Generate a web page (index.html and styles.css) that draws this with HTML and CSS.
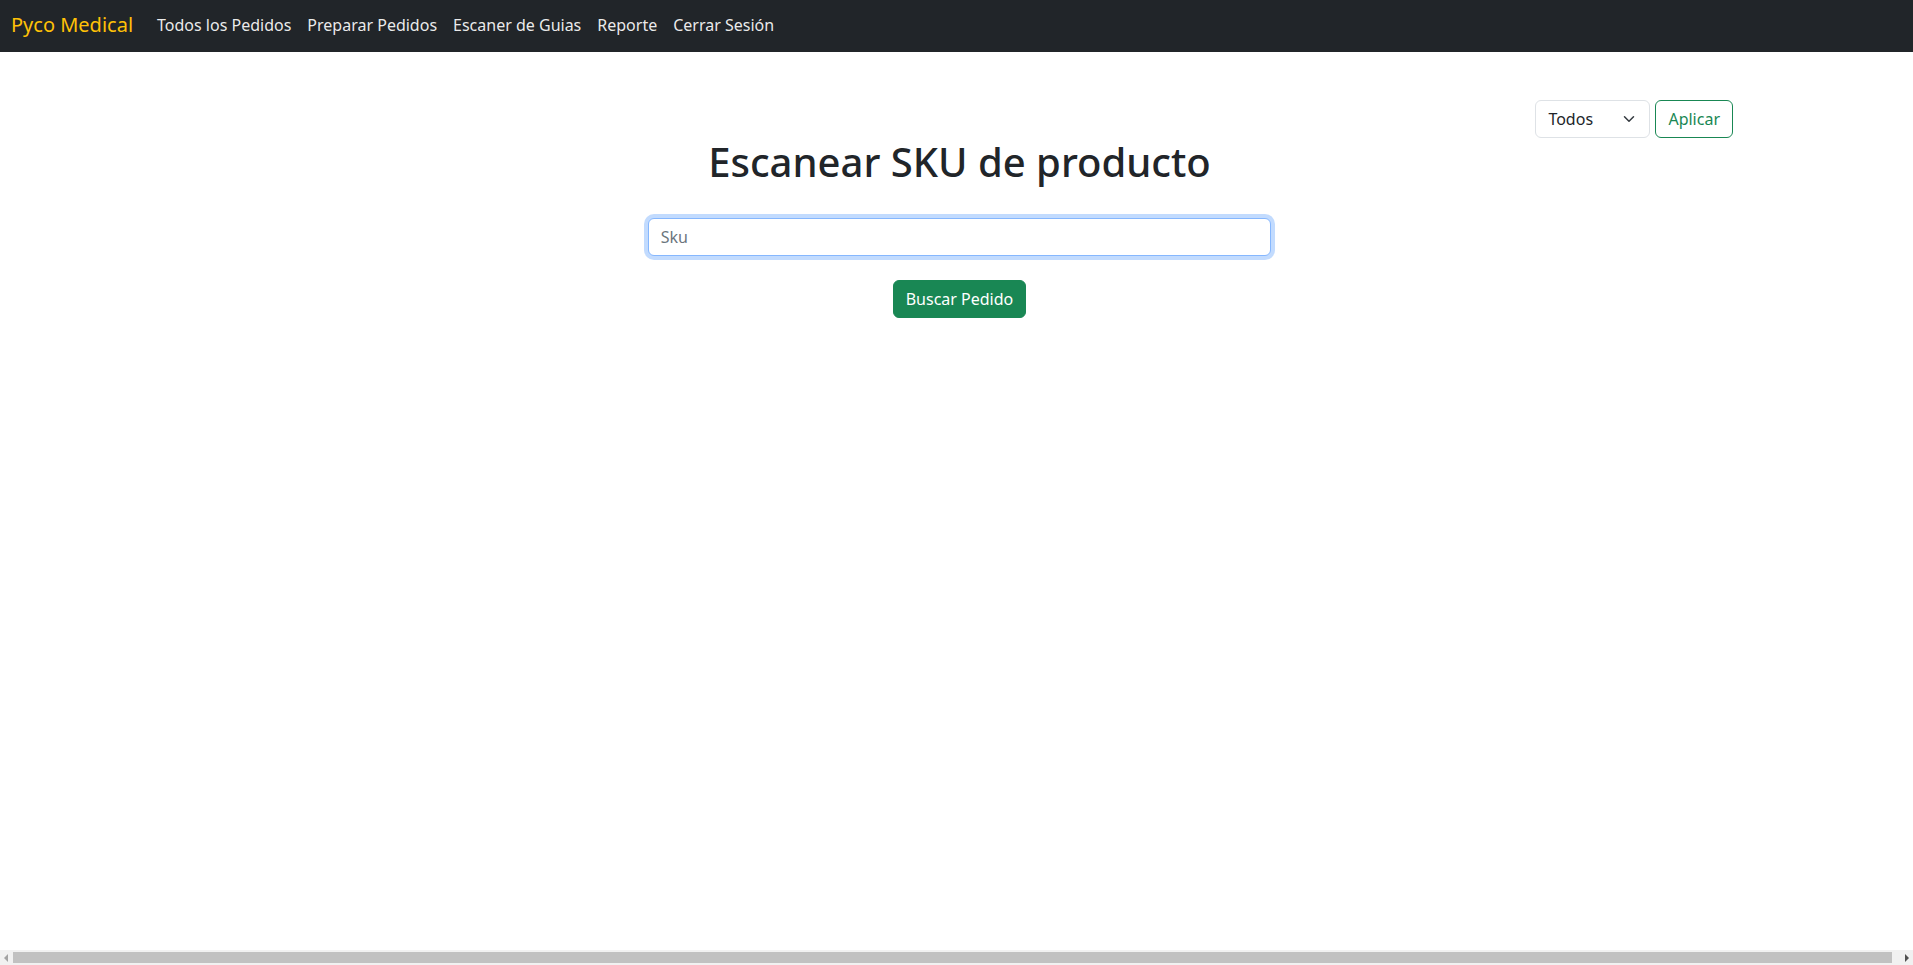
FILE: index.html
```html
<!DOCTYPE html>
<html lang="es">
<head>
<meta charset="utf-8">
<title>Pyco Medical</title>
<link rel="stylesheet" href="styles.css">
</head>
<body>
<nav class="navbar">
  <a class="brand" href="#">Pyco Medical</a>
  <ul class="nav">
    <li><a href="#">Todos los Pedidos</a></li>
    <li><a href="#">Preparar Pedidos</a></li>
    <li><a href="#">Escaner de Guias</a></li>
    <li><a href="#">Reporte</a></li>
    <li><a href="#">Cerrar Sesión</a></li>
  </ul>
</nav>
<main class="row">
  <div class="filter">
    <div class="select">
      <span>Todos</span>
      <svg width="16" height="12" viewBox="0 0 16 16" aria-hidden="true"><path d="M2 5l6 6 6-6" fill="none" stroke="#343a40" stroke-width="2" stroke-linecap="round" stroke-linejoin="round"/></svg>
    </div>
    <button class="btn btn-outline">Aplicar</button>
  </div>
  <h1 class="title">Escanear SKU de producto</h1>
  <div class="col">
    <input class="input" type="text" placeholder="Sku">
  </div>
  <div class="actions">
    <button class="btn btn-success">Buscar Pedido</button>
  </div>
</main>
<div class="hscroll" aria-hidden="true">
  <svg class="arrow" width="8" height="8" viewBox="0 0 8 8"><path d="M6 0v8L2 4z" fill="#a3a3a3"/></svg>
  <div class="thumb"></div>
  <svg class="arrow" width="8" height="8" viewBox="0 0 8 8"><path d="M2 0v8l4-4z" fill="#505050"/></svg>
</div>
</body>
</html>
```
FILE: styles.css
```css
html, body {
  margin: 0;
  padding: 0;
}
body {
  font-family: "Noto Sans", "Open Sans", sans-serif;
  font-size: 16px;
  line-height: 1.5;
  color: #212529;
  background: #fff;
  overflow-x: hidden;
}
.navbar {
  display: flex;
  align-items: center;
  height: 52px;
  padding: 0 12px 2px 11px;
  background: #212529;
  box-sizing: border-box;
}
.brand {
  color: #ffc107;
  font-size: 20px;
  text-decoration: none;
  margin-right: 16px;
  line-height: 30px;
}
.nav {
  display: flex;
  list-style: none;
  margin: 0;
  padding: 0;
}
.nav a {
  display: block;
  padding: 8px 8px;
  color: rgba(255, 255, 255, 0.92);
  text-decoration: none;
  line-height: 24px;
}
.row {
  display: flex;
  flex-direction: column;
  align-items: center;
  margin: 0 -18px 0 -12px;
}
.filter {
  align-self: stretch;
  display: flex;
  justify-content: flex-end;
  gap: 5px;
  margin-top: 48px;
  padding-right: 198px;
}
.select {
  display: flex;
  align-items: center;
  justify-content: space-between;
  width: 115px;
  height: 38px;
  box-sizing: border-box;
  padding: 0 12px;
  border: 1px solid #dee2e6;
  border-radius: 6px;
  color: #212529;
}
.select svg {
  display: block;
}
.btn {
  font-family: inherit;
  font-size: 16px;
  line-height: 24px;
  padding: 6px 12px;
  border-radius: 6px;
  cursor: pointer;
}
.btn-outline {
  background: #fff;
  color: #198754;
  border: 1px solid #198754;
}
.btn-success {
  background: #198754;
  color: #fff;
  border: 1px solid #198754;
}
.title {
  margin: 0 0 32px;
  font-size: 40px;
  font-weight: 500;
  line-height: 1.2;
  color: #212529;
}
.col {
  width: 33.3333%;
  padding: 0 12px;
  box-sizing: border-box;
}
.input {
  display: block;
  width: 100%;
  height: 38px;
  box-sizing: border-box;
  padding: 6px 12px;
  font-family: inherit;
  font-size: 16px;
  line-height: 24px;
  color: #212529;
  border: 1px solid #86b7fe;
  border-radius: 6px;
  box-shadow: 0 0 0 4px rgba(13, 110, 253, 0.25);
  outline: none;
}
.input::placeholder {
  color: #6c757d;
}
.actions {
  margin-top: 24px;
}
.hscroll {
  position: fixed;
  left: 0;
  right: 0;
  bottom: 0;
  height: 15px;
  display: flex;
  align-items: center;
  gap: 3px;
  padding: 0 2px;
  background: #f1f1f1;
  box-sizing: border-box;
}
.hscroll .arrow {
  flex: none;
  display: block;
}
.thumb {
  flex: 1;
  height: 11px;
  margin-right: 8px;
  background: #c1c1c1;
}
```
